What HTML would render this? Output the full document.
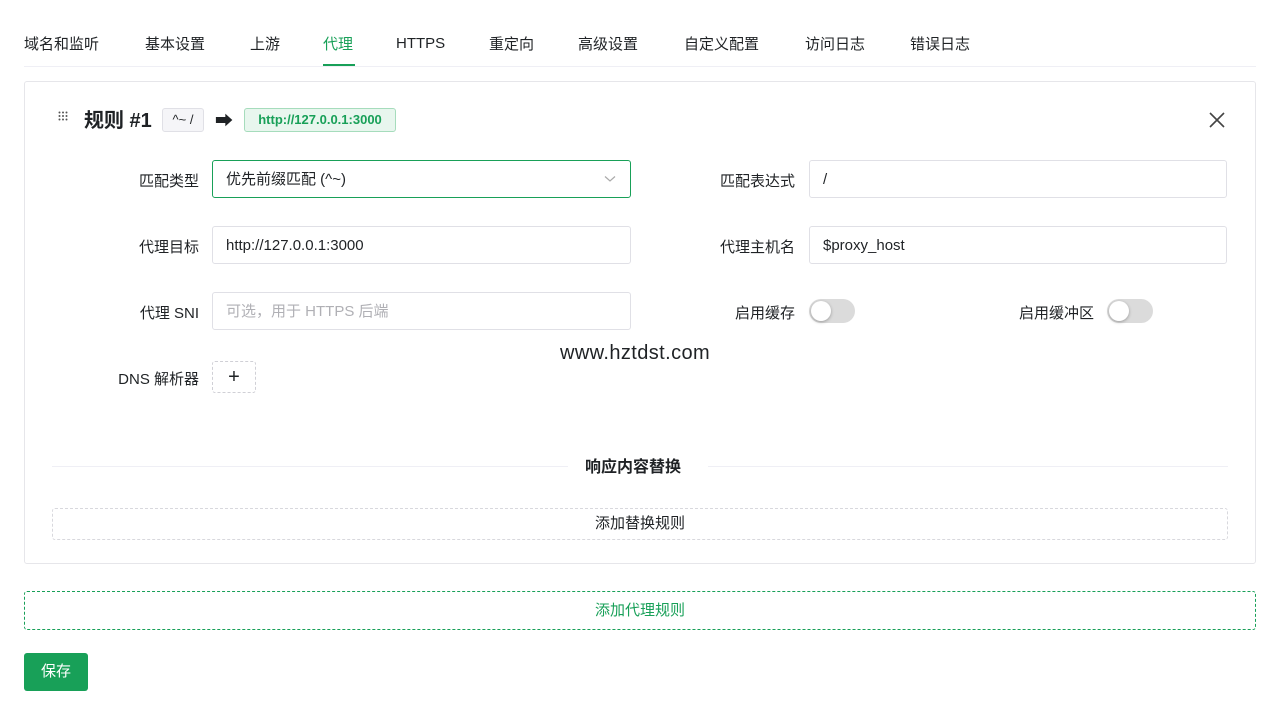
<!DOCTYPE html>
<html><head><meta charset="utf-8"><style>
*{box-sizing:border-box;margin:0;padding:0}
body{width:1280px;height:715px;background:#fff;font-family:"Liberation Sans","Noto Sans CJK SC",sans-serif;color:#1f2225;font-size:15px;position:relative;overflow:hidden}
.a{position:absolute}
.tabs span{position:absolute;top:33px;font-size:15px;color:#1f2225}
.inp{position:absolute;height:38px;border:1px solid #e0e0e6;border-radius:3px;padding:0 13px;line-height:38px;font-size:15px}
.lbl{position:absolute;font-size:15px;text-align:right}
.sw{position:absolute;width:46px;height:24px;border-radius:12px;background:#dbdbdb}
.sw:after{content:"";position:absolute;left:2px;top:2px;width:20px;height:20px;border-radius:50%;background:#fff;box-shadow:0 1px 3px rgba(0,0,0,.3)}
</style></head><body>
<div class="tabs">
<span style="left:24px">域名和监听</span><span style="left:145px">基本设置</span><span style="left:250px">上游</span><span style="left:323px;color:#18a058">代理</span><span style="left:396px;top:35px">HTTPS</span><span style="left:489px">重定向</span><span style="left:578px">高级设置</span><span style="left:684px">自定义配置</span><span style="left:805px">访问日志</span><span style="left:910px">错误日志</span>
</div>
<div class="a" style="left:24px;top:66px;width:1232px;height:1px;background:#efeff5"></div>
<div class="a" style="left:323px;top:64px;width:32px;height:2px;background:#18a058"></div>
<div class="a" style="left:24px;top:81px;width:1232px;height:483px;border:1px solid #e6e6ea;border-radius:3px"></div>
<svg class="a" style="left:58px;top:111px" width="12" height="12" fill="#555"><g><circle cx="1.5" cy="1.5" r="1"/><circle cx="5" cy="1.5" r="1"/><circle cx="8.5" cy="1.5" r="1"/><circle cx="1.5" cy="5" r="1"/><circle cx="5" cy="5" r="1"/><circle cx="8.5" cy="5" r="1"/><circle cx="1.5" cy="8.5" r="1"/><circle cx="5" cy="8.5" r="1"/><circle cx="8.5" cy="8.5" r="1"/></g></svg>
<div class="a" style="left:84px;top:104px;font-size:20px;font-weight:bold">规则 #1</div>
<div class="a" style="left:162px;top:108px;width:42px;height:24px;border:1px solid #e0e0e6;background:#f5f5f8;border-radius:3px;font-size:13px;text-align:center;line-height:22px">^~ /</div>
<div class="a" style="left:215px;top:107px;font-size:18px">➡</div>
<div class="a" style="left:244px;top:108px;width:152px;height:24px;border:1px solid #a6dcbc;background:#e8f6ee;color:#18a058;border-radius:3px;font-size:13px;font-weight:bold;text-align:center;line-height:22px">http://127.0.0.1:3000</div>
<svg class="a" style="left:1209px;top:112px" width="16" height="16" stroke="#444" stroke-width="1.6"><path d="M1 1L15 15M15 1L1 15"/></svg>
<div class="lbl" style="left:100px;width:99px;top:170px">匹配类型</div>
<div class="inp" style="left:212px;top:160px;width:419px;border-color:#18a058">优先前缀匹配 (^~)<svg style="position:absolute;right:14px;top:14px" width="12" height="8" fill="none" stroke="#aaa" stroke-width="1.2"><path d="M1 1.5L6 6L11 1.5"/></svg></div>
<div class="lbl" style="left:690px;width:105px;top:170px">匹配表达式</div>
<div class="inp" style="left:809px;top:160px;width:418px">/</div>
<div class="lbl" style="left:100px;width:99px;top:236px">代理目标</div>
<div class="inp" style="left:212px;top:226px;width:419px">http://127.0.0.1:3000</div>
<div class="lbl" style="left:690px;width:105px;top:236px">代理主机名</div>
<div class="inp" style="left:809px;top:226px;width:418px">$proxy_host</div>
<div class="lbl" style="left:100px;width:99px;top:302px">代理 SNI</div>
<div class="inp" style="left:212px;top:292px;width:419px;color:#b0b0b5">可选，用于 HTTPS 后端</div>
<div class="lbl" style="left:690px;width:105px;top:302px">启用缓存</div>
<div class="sw" style="left:809px;top:299px"></div>
<div class="lbl" style="left:990px;width:104px;top:302px">启用缓冲区</div>
<div class="sw" style="left:1107px;top:299px"></div>
<div class="a" style="left:560px;top:342px;font-size:20px;letter-spacing:0.4px">www.hztdst.com</div>
<div class="lbl" style="left:100px;width:99px;top:368px">DNS 解析器</div>
<div class="a" style="left:212px;top:361px;width:44px;height:32px;border:1px dashed #d0d0d6;border-radius:3px;text-align:center;line-height:30px;font-size:20px">+</div>
<div class="a" style="left:52px;top:466px;width:516px;height:1px;background:#efeff5"></div>
<div class="a" style="left:708px;top:466px;width:520px;height:1px;background:#efeff5"></div>
<div class="a" style="left:585px;top:453px;font-size:16px;font-weight:bold">响应内容替换</div>
<div class="a" style="left:52px;top:508px;width:1176px;height:32px;border:1px dashed #d8d8dd;border-radius:3px;text-align:center;line-height:30px">添加替换规则</div>
<div class="a" style="left:24px;top:591px;width:1232px;height:39px;border:1px dashed #18a058;border-radius:3px;text-align:center;line-height:37px;color:#18a058">添加代理规则</div>
<div class="a" style="left:24px;top:653px;width:64px;height:38px;background:#18a058;border-radius:3px;color:#fff;text-align:center;line-height:38px">保存</div>
</body></html>
